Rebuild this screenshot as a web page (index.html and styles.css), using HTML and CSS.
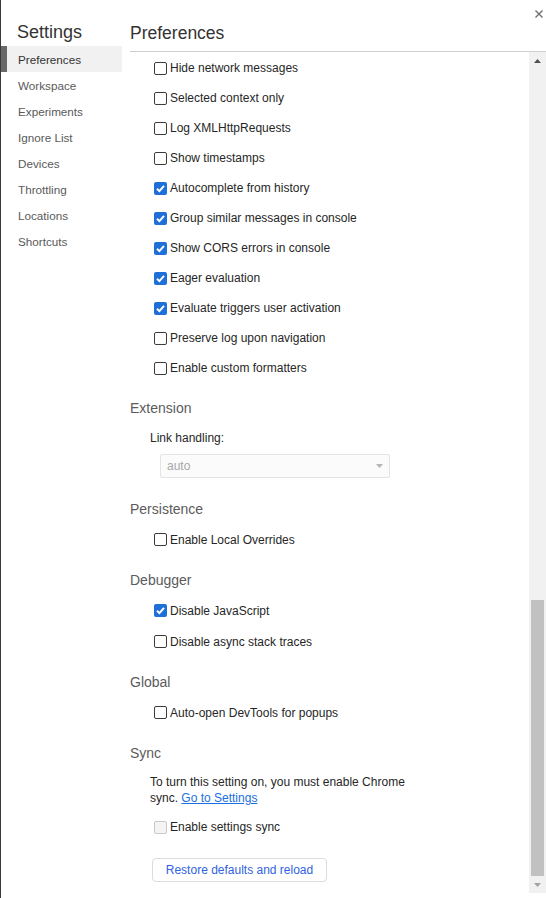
FILE: index.html
```html
<!DOCTYPE html>
<html lang="en">
<head>
<meta charset="utf-8">
<title>Settings</title>
<link rel="stylesheet" href="styles.css">
</head>
<body>
<div class="window">
  <aside class="sidebar">
    <h1 class="sidebar-title">Settings</h1>
    <nav class="nav">
      <div class="nav-item selected">Preferences</div>
      <div class="nav-item">Workspace</div>
      <div class="nav-item">Experiments</div>
      <div class="nav-item">Ignore List</div>
      <div class="nav-item">Devices</div>
      <div class="nav-item">Throttling</div>
      <div class="nav-item">Locations</div>
      <div class="nav-item">Shortcuts</div>
    </nav>
  </aside>
  <main class="panel">
    <header class="panel-head">
      <h2 class="panel-title">Preferences</h2>
      <button class="close" aria-label="Close">
        <svg width="8" height="8" viewBox="0 0 8 8"><path d="M0.5 0.5 L7.5 7.5 M7.5 0.5 L0.5 7.5" stroke="#6e6e6e" stroke-width="1.4"/></svg>
      </button>
    </header>
    <div class="panel-body">
      <div class="content">
        <div class="group">
          <label class="row"><span class="cb"></span>Hide network messages</label>
          <label class="row"><span class="cb"></span>Selected context only</label>
          <label class="row"><span class="cb"></span>Log XMLHttpRequests</label>
          <label class="row"><span class="cb"></span>Show timestamps</label>
          <label class="row"><span class="cb checked"><svg width="13" height="13" viewBox="0 0 13 13"><path d="M3 6.8 L5.4 9.1 L10 3.9" fill="none" stroke="#fff" stroke-width="2"/></svg></span>Autocomplete from history</label>
          <label class="row"><span class="cb checked"><svg width="13" height="13" viewBox="0 0 13 13"><path d="M3 6.8 L5.4 9.1 L10 3.9" fill="none" stroke="#fff" stroke-width="2"/></svg></span>Group similar messages in console</label>
          <label class="row"><span class="cb checked"><svg width="13" height="13" viewBox="0 0 13 13"><path d="M3 6.8 L5.4 9.1 L10 3.9" fill="none" stroke="#fff" stroke-width="2"/></svg></span>Show CORS errors in console</label>
          <label class="row"><span class="cb checked"><svg width="13" height="13" viewBox="0 0 13 13"><path d="M3 6.8 L5.4 9.1 L10 3.9" fill="none" stroke="#fff" stroke-width="2"/></svg></span>Eager evaluation</label>
          <label class="row"><span class="cb checked"><svg width="13" height="13" viewBox="0 0 13 13"><path d="M3 6.8 L5.4 9.1 L10 3.9" fill="none" stroke="#fff" stroke-width="2"/></svg></span>Evaluate triggers user activation</label>
          <label class="row"><span class="cb"></span>Preserve log upon navigation</label>
          <label class="row"><span class="cb"></span>Enable custom formatters</label>
        </div>

        <section class="section extension">
          <h3 class="section-title">Extension</h3>
          <div class="field-label">Link handling:</div>
          <div class="select">
            <span>auto</span>
            <svg width="7" height="4" viewBox="0 0 7 4"><path d="M0 0 H7 L3.5 4 Z" fill="#b5b5b5"/></svg>
          </div>
        </section>

        <section class="section">
          <h3 class="section-title">Persistence</h3>
          <label class="row tall"><span class="cb"></span>Enable Local Overrides</label>
        </section>

        <section class="section">
          <h3 class="section-title">Debugger</h3>
          <label class="row tall"><span class="cb checked"><svg width="13" height="13" viewBox="0 0 13 13"><path d="M3 6.8 L5.4 9.1 L10 3.9" fill="none" stroke="#fff" stroke-width="2"/></svg></span>Disable JavaScript</label>
          <label class="row tall"><span class="cb"></span>Disable async stack traces</label>
        </section>

        <section class="section">
          <h3 class="section-title">Global</h3>
          <label class="row tall"><span class="cb"></span>Auto-open DevTools for popups</label>
        </section>

        <section class="section">
          <h3 class="section-title">Sync</h3>
          <p class="sync-text">To turn this setting on, you must enable Chrome<br>sync. <a href="#" class="link">Go to Settings</a></p>
          <label class="row sync-row"><span class="cb disabled"></span>Enable settings sync</label>
          <button class="restore">Restore defaults and reload</button>
        </section>
      </div>
      <div class="scrollbar">
        <div class="sb-btn"><svg width="7" height="4" viewBox="0 0 7 4"><path d="M0 4 H7 L3.5 0 Z" fill="#505050"/></svg></div>
        <div class="sb-track"><div class="sb-thumb"></div></div>
        <div class="sb-btn"><svg width="7" height="4" viewBox="0 0 7 4"><path d="M0 0 H7 L3.5 4 Z" fill="#a3a3a3"/></svg></div>
      </div>
    </div>
  </main>
</div>
</body>
</html>
```

FILE: styles.css
```css
* { box-sizing: border-box; }
html, body { margin: 0; padding: 0; }
body {
  font-family: "Liberation Sans", Arial, sans-serif;
  font-size: 12px;
  color: #262626;
  background: #fff;
}
.window {
  display: flex;
  width: 546px;
  height: 898px;
  border-left: 1px solid #3a3a3a;
  overflow: hidden;
}

/* Sidebar */
.sidebar { width: 121px; flex: none; }
.sidebar-title {
  margin: 0;
  height: 46px;
  padding: 19px 0 0 16px;
  font-size: 18px;
  font-weight: normal;
  line-height: 26px;
  color: #333;
}
.nav { display: flex; flex-direction: column; }
.nav-item {
  height: 26px;
  padding: 2px 0 0 17px;
  line-height: 24px;
  font-size: 11.7px;
  color: #5a5a5a;
}
.nav-item.selected {
  background: #f1f1f1;
  border-left: 6px solid #686868;
  padding-left: 11px;
  color: #333;
}

/* Panel */
.panel {
  flex: 1;
  display: flex;
  flex-direction: column;
  padding-left: 8px;
  min-width: 0;
}
.panel-head {
  height: 52px;
  flex: none;
  display: flex;
  justify-content: space-between;
  align-items: flex-start;
  border-bottom: 1px solid #cfcfcf;
}
.panel-title {
  margin: 0;
  padding-top: 20px;
  font-size: 17.5px;
  font-weight: normal;
  line-height: 26px;
  color: #333;
}
.close {
  border: 0;
  background: none;
  padding: 0;
  margin: 10px 3px 0 0;
  width: 8px;
  height: 8px;
  display: flex;
}
.panel-body {
  flex: 1;
  display: flex;
  min-height: 0;
  padding-bottom: 5px;
}
.content {
  flex: 1;
  padding-top: 1px;
  min-width: 0;
}

/* Rows */
.row {
  display: flex;
  align-items: center;
  gap: 3px;
  height: 30px;
  padding-left: 24px;
}
.row.tall { height: 31px; }
.cb {
  width: 13px;
  height: 13px;
  flex: none;
  border: 1px solid #3c3c3c;
  border-radius: 2px;
  background: #fff;
  display: flex;
}
.cb.checked {
  border: 0;
  background: #1f6fd8;
}
.cb.disabled {
  border-color: #c8c8c8;
  background: #f4f4f4;
}

/* Sections */
.section-title {
  margin: 15px 0 5px;
  height: 20px;
  line-height: 20px;
  font-size: 14px;
  font-weight: normal;
  color: #5b5b5b;
}
.extension { padding-bottom: 6px; }
.field-label {
  margin: 10px 0 6px;
  padding-left: 20px;
  line-height: 20px;
}
.select {
  margin-left: 30px;
  width: 230px;
  height: 24px;
  border: 1px solid #e4e4e4;
  border-radius: 2px;
  background: #fafbfa;
  display: flex;
  align-items: center;
  justify-content: space-between;
  padding: 0 6px;
  color: #a8a8a8;
}
.sync-text {
  margin: 11px 0 0;
  padding-left: 20px;
  line-height: 16px;
}
.link { color: #1a6fe0; text-decoration: underline; }
.row.sync-row { margin-top: 6px; height: 30px; }
.restore {
  display: block;
  margin: 16px 0 0 22px;
  width: 175px;
  height: 24px;
  border: 1px solid #dadce0;
  border-radius: 4px;
  background: #fff;
  color: #2f63e0;
  font-family: inherit;
  font-size: 12px;
  font-weight: 500;
  padding: 0;
}

/* Scrollbar */
.scrollbar {
  width: 17px;
  flex: none;
  background: #f1f1f1;
  display: flex;
  flex-direction: column;
}
.sb-btn {
  height: 17px;
  flex: none;
  display: flex;
  align-items: center;
  justify-content: center;
}
.sb-track {
  flex: 1;
  display: flex;
  flex-direction: column;
  justify-content: flex-end;
}
.sb-thumb {
  height: 276px;
  margin: 0 2px;
  background: #c1c1c1;
}
```
